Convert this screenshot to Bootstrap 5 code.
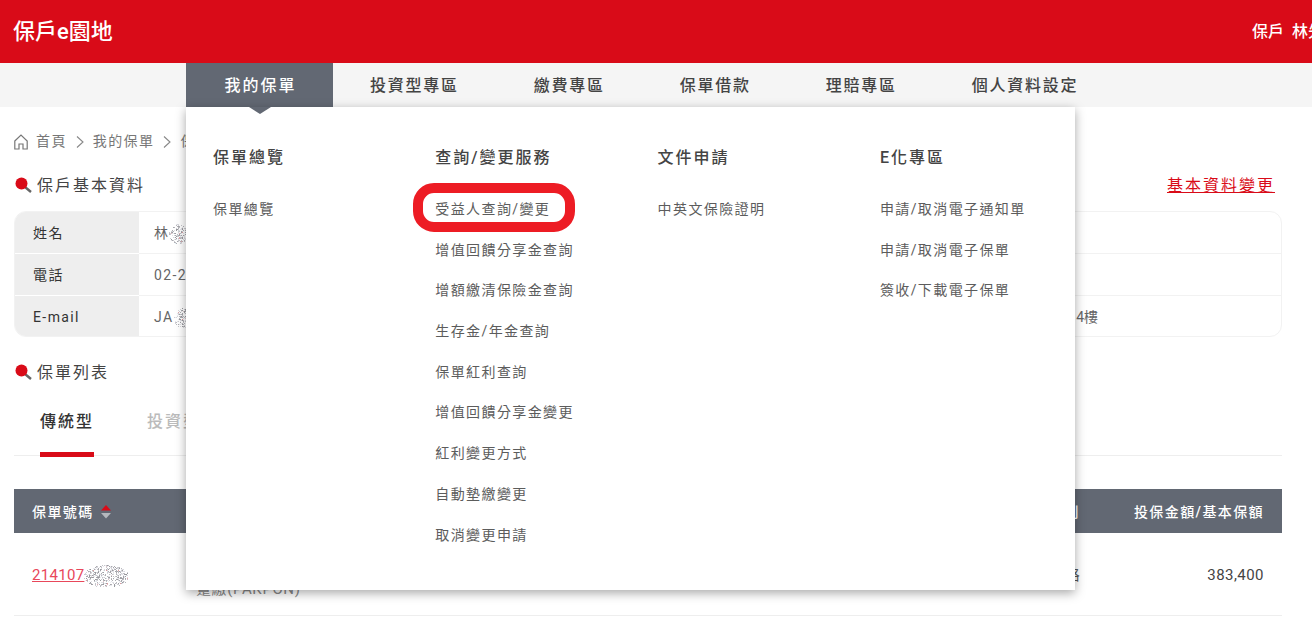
<!DOCTYPE html>
<html lang="zh-Hant">
<head>
  <meta charset="UTF-8">
  <title>保戶e園地</title>
  <meta name="viewport" content="width=device-width, initial-scale=1">
  <link href="https://cdn.jsdelivr.net/npm/bootstrap@5.3.3/dist/css/bootstrap.min.css" rel="stylesheet">
  <style>
    html, body { height: 630px; overflow: hidden; }
    body {
      font-family: Roboto, "Noto Sans CJK TC", sans-serif;
      font-size: 14px;
      letter-spacing: .1em;
      color: #555;
      background: #fff;
    }
    .top-bar { height: 63px; background: #d90b18; color: #fff; padding-left: 13px; overflow: hidden; }
    .site-name { font-size: 22px; font-weight: 500; letter-spacing: 0; }
    .user-box { width: 60px; margin-left: auto; white-space: nowrap; font-size: 16px; font-weight: 500; letter-spacing: 0; word-spacing: 4px; }
    .main-nav { height: 44px; background: #f5f5f5; padding-left: 186px; position: relative; }
    .main-nav a { padding: 0 37.5px; font-size: 16px; letter-spacing: 1.75px; font-weight: 500; color: #444; text-decoration: none; line-height: 46px; white-space: nowrap; }
    .main-nav a.active { background: #626873; color: #fff; position: relative; padding: 0 36.5px 0 38.5px; letter-spacing: 2px; margin-right: -.5px; }
    .main-nav a.active::after {
      content: ""; position: absolute; left: 50%; top: 44px; margin-left: -11px;
      border: 11px solid transparent; border-bottom: 0; border-top: 7px solid #626873; z-index: 20;
    }
    .mega-menu {
      position: absolute; left: 186px; top: 107px; width: 889px; height: 483px;
      background: #fff; box-shadow: 0 3px 10px rgba(0,0,0,.35); z-index: 10;
      padding: 39px 0 0 27px;
    }
    .mega-col { flex: 0 0 222.3px; }
    .mega-col h6 { font-size: 16px; font-weight: 500; color: #444; line-height: 24px; margin: 0 0 29px; letter-spacing: 2px; }
    .mega-col a { display: block; height: 40.7px; line-height: 21px; color: #5c5c5c; text-decoration: none; white-space: nowrap; }
    .mark-ring { position: relative; }
    .mark-ring::after {
      content: ""; position: absolute; left: -22px; top: -18px; width: 162px; height: 49px;
      border: 10px solid #ed1c24; border-radius: 21px;
    }
    .page-body { padding: 0 30px 0 14px; }
    .crumbs { height: 21px; margin-top: 24px; color: #777; gap: 8px; }
    .crumbs svg { flex: none; }
    .sec-title { font-size: 16px; letter-spacing: 2px; color: #444; font-weight: 400; }
    .sec-title svg { margin-right: 4px; }
    .head-one { margin-top: 22px; height: 24px; }
    .edit-link { color: #d90b18; font-size: 16px; letter-spacing: 2px; margin-right: 7px; }
    .info-box { margin-top: 13px; height: 126px; border: 1px solid #f2f2f2; border-radius: 12px; overflow: hidden; }
    .info-row { height: 42px; border-bottom: 1px solid #f2f2f2; line-height: 43px; }
    .info-row:last-child { border-bottom: 0; }
    .info-label { width: 124px; background: #eee; padding-left: 18px; color: #333; border-bottom: 1px solid #fff; margin-bottom: -1px; }
    .info-row:last-child .info-label { border-bottom: 0; }
    .info-val { padding-left: 15px; color: #666; }
    .addr-val { margin-left: auto; margin-right: 183px; color: #666; letter-spacing: 0; }
    .head-two { margin-top: 24px; height: 24px; }
    .type-tabs { margin-top: 12px; height: 59px; border-bottom: 1px solid #eee; padding-left: 26px; gap: 53px; }
    .type-tabs a { font-size: 16px; letter-spacing: 2px; font-weight: 500; line-height: 50px; height: 60px; text-decoration: none; color: #bbb; }
    .type-tabs a.active { color: #333; border-bottom: 5px solid #d90b18; }
    .policy-table { margin: 33px 0 0; width: 100%; table-layout: fixed; }
    .policy-table th { background: #626873; color: #fff; font-weight: 500; height: 44px; padding: 2px 18px 0; vertical-align: middle; white-space: nowrap; border: 0; }
    .policy-table td { height: 82px; padding: 3px 18px 0; border-bottom: 1px solid #eee; color: #555; vertical-align: middle; letter-spacing: .02em; font-size: 15px; }
    .policy-table td.amount { text-align: right; letter-spacing: .03em; color: #444; }
    .sort-arrows { display: inline-block; vertical-align: -2px; margin-left: 2px; }
    .policy-no { color: #e8475a; }
    .noise { display: inline-block; vertical-align: middle; }
    .policy-table td.plan-name { color: #888; line-height: 18px; padding: 29px 18px 0 17px; vertical-align: top; letter-spacing: .04em; }
  </style>
</head>
<body>

  <div class="top-bar d-flex align-items-center">
    <div class="site-name">保戶e園地</div>
    <div class="user-box">保戶 林先生 您好</div>
  </div>

  <nav class="main-nav d-flex">
    <a class="active" href="#">我的保單</a>
    <a href="#">投資型專區</a>
    <a href="#">繳費專區</a>
    <a href="#">保單借款</a>
    <a href="#">理賠專區</a>
    <a href="#">個人資料設定</a>
  </nav>

  <!-- dropdown -->
  <div class="mega-menu d-flex">
    <div class="mega-col">
      <h6>保單總覽</h6>
      <a href="#">保單總覽</a>
    </div>
    <div class="mega-col">
      <h6>查詢/變更服務</h6>
      <a href="#"><span class="mark-ring">受益人查詢/變更</span></a>
      <a href="#">增值回饋分享金查詢</a>
      <a href="#">增額繳清保險金查詢</a>
      <a href="#">生存金/年金查詢</a>
      <a href="#">保單紅利查詢</a>
      <a href="#">增值回饋分享金變更</a>
      <a href="#">紅利變更方式</a>
      <a href="#">自動墊繳變更</a>
      <a href="#">取消變更申請</a>
    </div>
    <div class="mega-col">
      <h6>文件申請</h6>
      <a href="#">中英文保險證明</a>
    </div>
    <div class="mega-col">
      <h6>E化專區</h6>
      <a href="#">申請/取消電子通知單</a>
      <a href="#">申請/取消電子保單</a>
      <a href="#">簽收/下載電子保單</a>
    </div>
  </div>

  <div class="page-body">
    <div class="crumbs d-flex align-items-center">
      <svg width="14" height="16" viewBox="0 0 14 16" fill="none" stroke="#777" stroke-width="1.2"><path d="M.8 7 7 1l6.2 6v8H9V10H5v5H.8z"/></svg>
      <span>首頁</span>
      <svg width="10" height="14" viewBox="0 0 10 14" fill="none" stroke="#888" stroke-width="1.1"><path d="m2 1.5 6 5.5-6 5.5"/></svg>
      <span>我的保單</span>
      <svg width="10" height="14" viewBox="0 0 10 14" fill="none" stroke="#888" stroke-width="1.1"><path d="m2 1.5 6 5.5-6 5.5"/></svg>
      <span>保單總覽</span>
    </div>

    <div class="head-one d-flex align-items-center justify-content-between">
      <div class="sec-title d-flex align-items-center">
        <svg width="19" height="18" viewBox="0 0 19 18"><path d="m11 10 6 5" stroke="#666" stroke-width="2.4"/><circle cx="7.5" cy="6.5" r="6" fill="#d90b18"/></svg>
        保戶基本資料
      </div>
      <a class="edit-link" href="#">基本資料變更</a>
    </div>

    <div class="info-box">
      <div class="info-row d-flex"><div class="info-label">姓名</div><div class="info-val">林<span class="noise" data-w="18" data-h="20"></span></div></div>
      <div class="info-row d-flex"><div class="info-label">電話</div><div class="info-val">02-2345-6789</div></div>
      <div class="info-row d-flex"><div class="info-label">E-mail</div><div class="info-val">JA<span class="noise" data-w="18" data-h="20"></span></div><div class="addr-val">台北市信義區松仁路100號14樓</div></div>
    </div>

    <div class="head-two sec-title d-flex align-items-center">
      <svg width="19" height="18" viewBox="0 0 19 18"><path d="m11 10 6 5" stroke="#666" stroke-width="2.4"/><circle cx="7.5" cy="6.5" r="6" fill="#d90b18"/></svg>
      保單列表
    </div>

    <div class="type-tabs d-flex">
      <a class="active" href="#">傳統型</a>
      <a href="#">投資型</a>
    </div>

    <table class="policy-table">
      <colgroup><col style="width:165px"><col><col style="width:200px"><col style="width:184px"></colgroup>
      <thead>
        <tr>
          <th>保單號碼
            <svg class="sort-arrows" width="12" height="14" viewBox="0 0 12 14"><path d="M6 0l5 5.5H1z" fill="#d90b18"/><path d="M1 8h10l-5 5.5z" fill="#b5b8bd"/></svg>
          </th>
          <th>商品名稱</th>
          <th class="text-end">類別</th>
          <th class="text-end">投保金額/基本保額</th>
        </tr>
      </thead>
      <tbody>
        <tr>
          <td><a class="policy-no" href="#">214107</a><span class="noise" data-w="44" data-h="22"></span></td>
          <td class="plan-name">鑫利終身壽險<br>躉繳(PAKPON)</td>
          <td class="text-end">通路</td>
          <td class="amount">383,400</td>
        </tr>
      </tbody>
    </table>
  </div>

  <script src="https://cdn.jsdelivr.net/npm/bootstrap@5.3.3/dist/js/bootstrap.bundle.min.js"></script>
  <script>
    // speckle for the masked personal data
    let seed = 7;
    function rnd() { seed = (seed * 16807) % 2147483647; return seed / 2147483647; }
    document.querySelectorAll(".noise").forEach(el => {
      const w = +el.dataset.w, h = +el.dataset.h;
      let dots = "";
      for (let y = 0; y < h; y++) {
        for (let x = 0; x < w; x++) {
          const dx = (x - w / 2) / (w / 2), dy = (y - h / 2) / (h / 2);
          if (dx * dx + dy * dy > 1.05) continue;
          if (rnd() > .5) continue;
          const g = Math.floor(150 + rnd() * 90);
          const red = rnd() < .07 ? 225 : g;
          dots += `<rect x="${x}" y="${y}" width="1" height="1" fill="rgb(${red},${g},${g + 5})"/>`;
        }
      }
      el.innerHTML = `<svg class="d-block" width="${w}" height="${h}">${dots}</svg>`;
    });
  </script>
</body>
</html>
